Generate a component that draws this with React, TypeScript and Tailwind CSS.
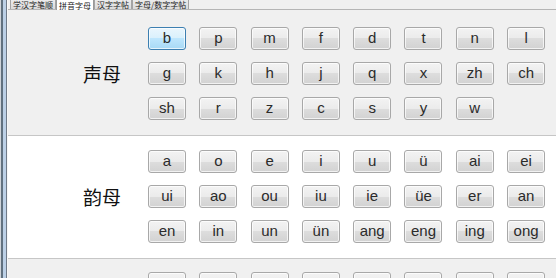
import React from 'react'

const tabs = ['学汉字笔顺', '拼音字母', '汉字字帖', '字母/数字字帖']

const shengmu = ['b', 'p', 'm', 'f', 'd', 't', 'n', 'l', 'g', 'k', 'h', 'j', 'q', 'x', 'zh', 'ch', 'sh', 'r', 'z', 'c', 's', 'y', 'w']
const yunmu = ['a', 'o', 'e', 'i', 'u', 'ü', 'ai', 'ei', 'ui', 'ao', 'ou', 'iu', 'ie', 'üe', 'er', 'an', 'en', 'in', 'un', 'ün', 'ang', 'eng', 'ing', 'ong']
const extra = ['', '', '', '', '', '', '', '']

function KeyButton({ label, active }: { label: string; active?: boolean }) {
    return (
        <div
            className={
                active
                    ? 'w-[38px] h-[23px] rounded-[3px] border border-[#3c7fb1] bg-[linear-gradient(#eaf6fd,#d9f0fc_50%,#bee6fd_50%,#a7d9f5)] flex items-center justify-center text-[15px] leading-none text-[#2b2b2b] shadow-[inset_0_0_0_1px_rgba(255,255,255,0.7)]'
                    : 'w-[38px] h-[23px] rounded-[3px] border border-[#a8a8a8] bg-[linear-gradient(#f3f3f3,#ebebeb_50%,#dddddd_50%,#d2d2d2)] flex items-center justify-center text-[15px] leading-none text-[#2b2b2b] shadow-[inset_0_0_0_1px_rgba(255,255,255,0.7)]'
            }
        >
            <span className="-mt-[2px]">{label}</span>
        </div>
    )
}

function Section({ title, keys, bg, pad }: { title: string; keys: string[]; bg: string; pad: string }) {
    return (
        <div className={`flex border-b border-[#c6c6c6] ${bg} ${pad}`}>
            <div className="w-[140px] flex items-center pl-[75px]">
                <span className="text-[19px] leading-none text-[#111] font-['Noto_Sans_CJK_SC',sans-serif]">{title}</span>
            </div>
            <div className="grid grid-cols-[repeat(8,38px)] gap-x-[13.3px] gap-y-[12px]">
                {keys.map((k, i) => (
                    <KeyButton key={i} label={k} active={k === 'b'} />
                ))}
            </div>
        </div>
    )
}

export default function App() {
    return (
        <div className="w-[556px] h-[278px] overflow-hidden flex bg-[#f0f0f0] font-['Liberation_Sans',Arial,sans-serif]">
            {/* window frame */}
            <div className="flex shrink-0">
                <div className="w-[1px] bg-[#cfd4da]" />
                <div className="w-[2px] bg-[#61717f]" />
                <div className="w-[3px] bg-[#bcd0e6]" />
                <div className="w-[1px] bg-[#6f7a88]" />
                <div className="w-[1px] bg-[#f7f7f7]" />
            </div>

            <div className="flex-1 flex flex-col">
                {/* tab strip */}
                <div className="h-[10px] flex items-end border-b border-[#b5b5b5] bg-[#f0f0f0] pl-[2px]">
                    {tabs.map((t, i) => (
                        <div
                            key={t}
                            className={
                                i === 1
                                    ? 'h-[10px] -mb-[1px] px-[2px] bg-white border-x border-[#9a9a9a] flex items-center text-[8px] leading-[9px] text-[#222] font-["Noto_Sans_CJK_SC",sans-serif]'
                                    : 'h-[9px] px-[2px] bg-[linear-gradient(#ececec,#dadada)] border-x border-[#a4a4a4] flex items-center text-[8px] leading-[9px] text-[#222] font-["Noto_Sans_CJK_SC",sans-serif]'
                            }
                        >
                            <span>{t}</span>
                        </div>
                    ))}
                </div>

                <Section title="声母" keys={shengmu} bg="bg-[#f0f0f0]" pad="pt-[17px] pb-[15px]" />
                <Section title="韵母" keys={yunmu} bg="bg-white" pad="pt-[14px] pb-[15px]" />

                <div className="flex bg-[#f0f0f0] pt-[13px]">
                    <div className="w-[140px]" />
                    <div className="grid grid-cols-[repeat(8,38px)] gap-x-[13.3px]">
                        {extra.map((k, i) => (
                            <KeyButton key={i} label={k} />
                        ))}
                    </div>
                </div>
            </div>
        </div>
    )
}
